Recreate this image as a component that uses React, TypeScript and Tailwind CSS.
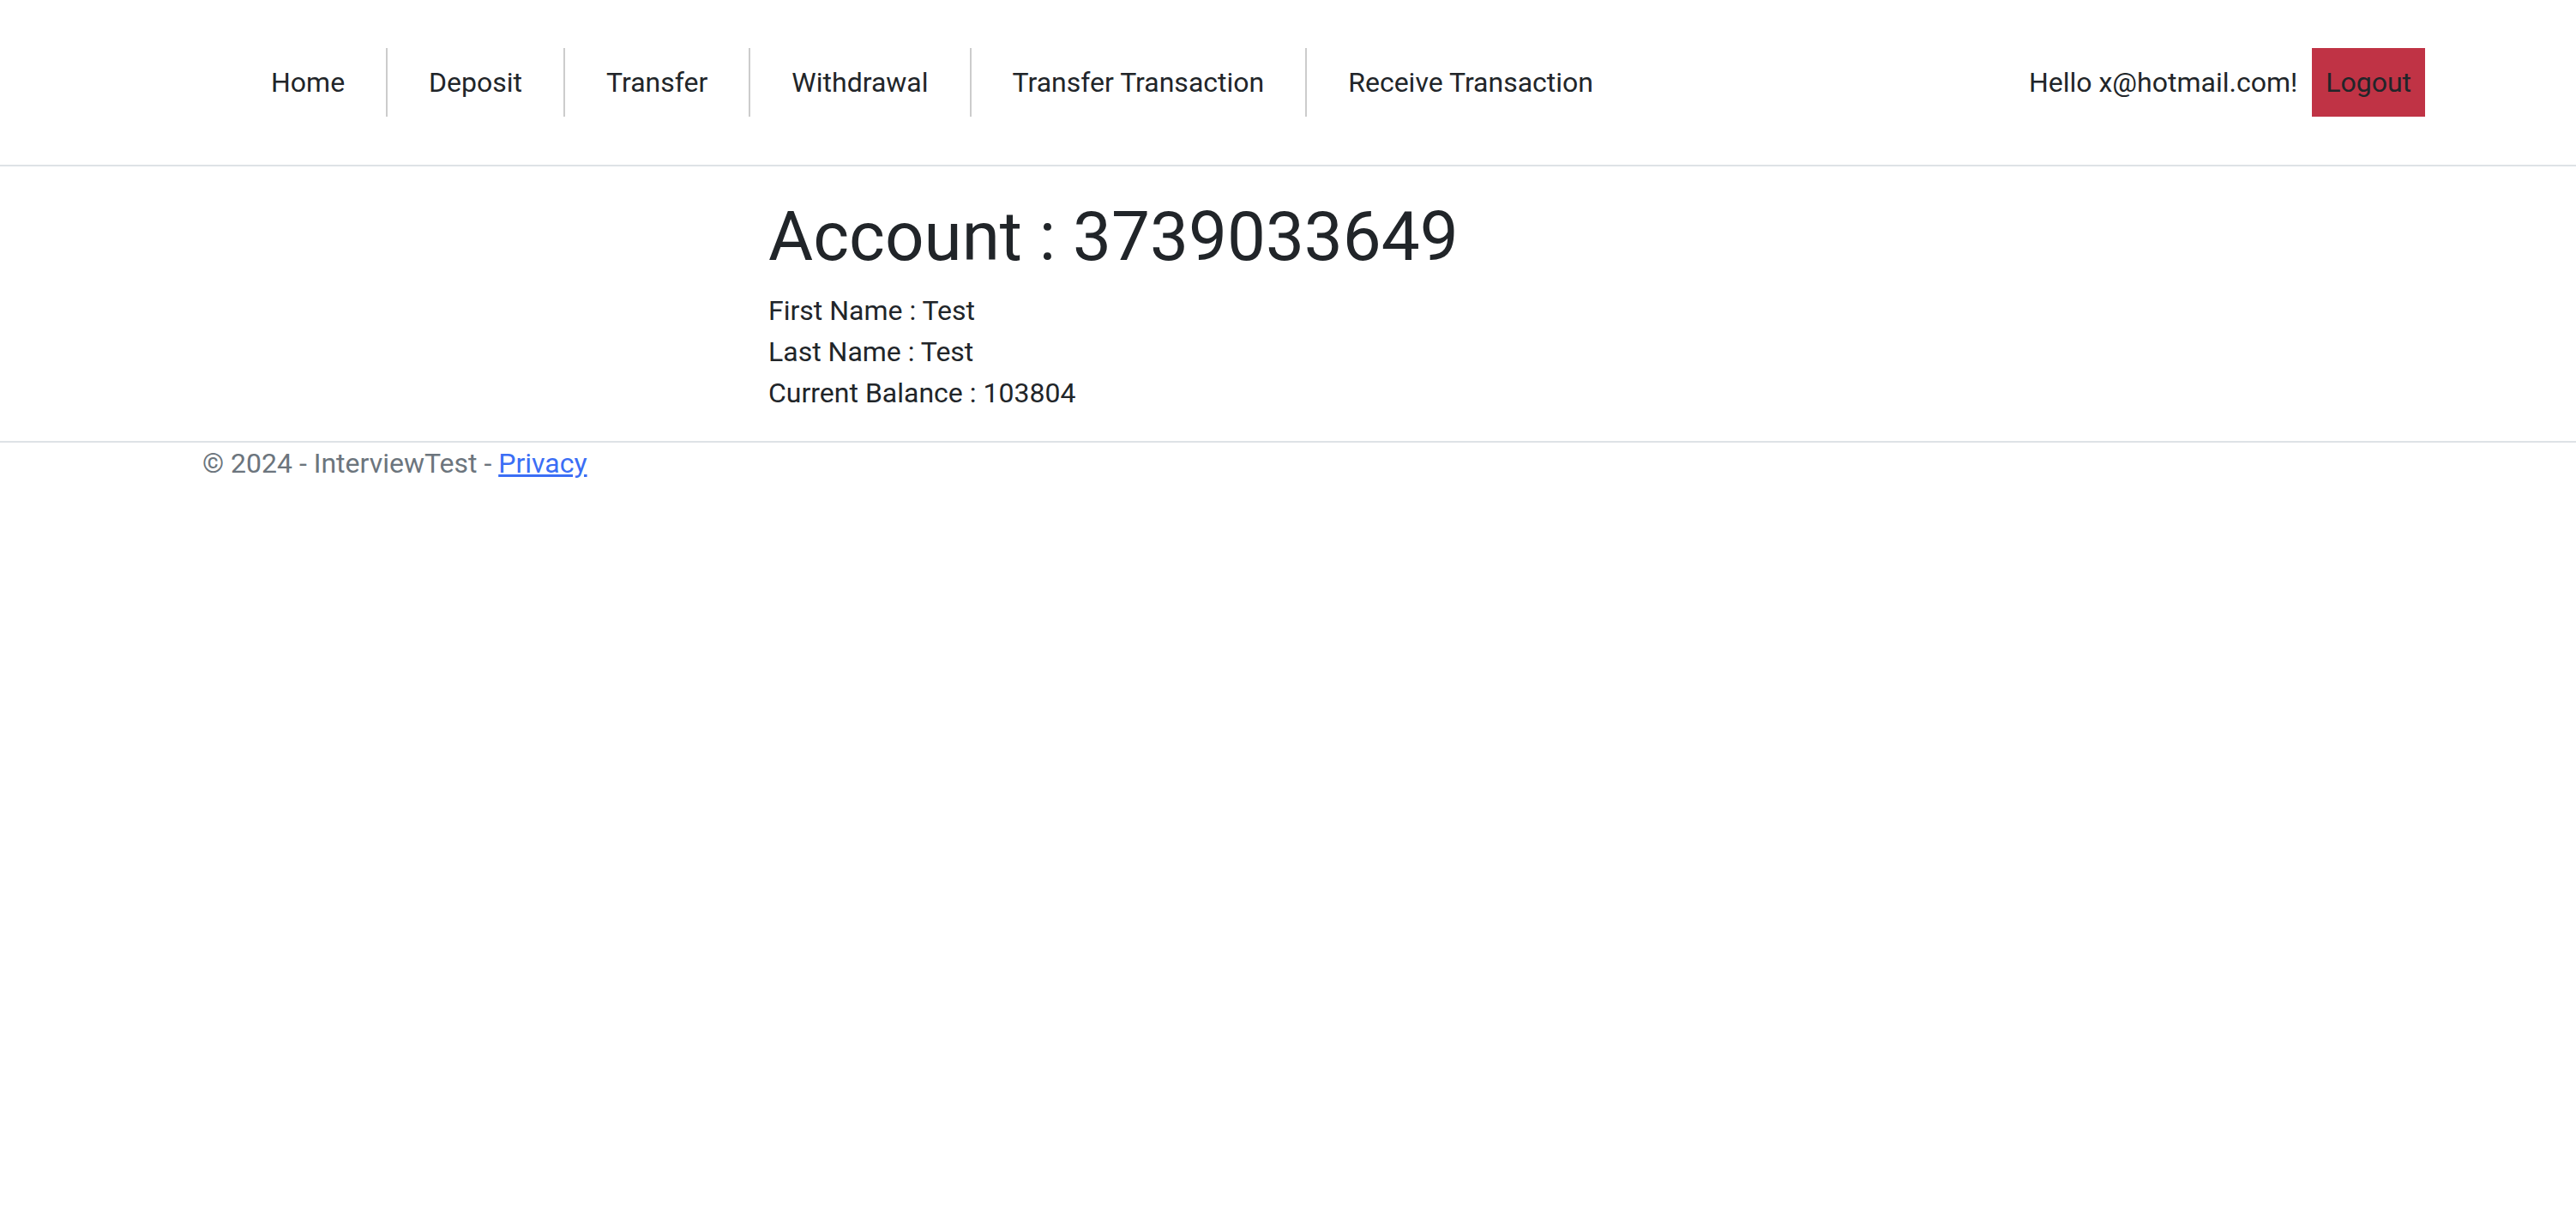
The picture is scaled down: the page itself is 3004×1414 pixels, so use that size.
import React from "react";

const links = ["Home", "Deposit", "Transfer", "Withdrawal", "Transfer Transaction", "Receive Transaction"];

export default function App() {
    return (
        <div className="min-h-screen bg-white text-[#212529] font-['Roboto',sans-serif]">
            <header className="border-b-2 border-[#dee2e6] py-[56px] pl-[268px] pr-[176px]">
                <div className="flex items-center justify-between">
                    <ul className="flex items-center">
                        {links.map((link, index) => (
                            <li
                                key={link}
                                className={`px-12 py-4 text-[32px] leading-[48px] ${index > 0 ? "border-l-2 border-[#cccccc]" : ""}`}
                            >
                                <a href="#">{link}</a>
                            </li>
                        ))}
                    </ul>
                    <div className="flex items-center gap-[17px]">
                        <span className="text-[32px] leading-[48px]">Hello x@hotmail.com!</span>
                        <button className="bg-[#c03345] px-[16px] py-4 text-[32px] leading-[48px] text-[#212529]">
                            Logout
                        </button>
                    </div>
                </div>
            </header>

            <main className="pl-[896px] pt-[34px] pb-[32px]">
                <h1 className="text-[80px] leading-[96px] mb-[14px]">Account : 3739033649</h1>
                <div className="text-[32px] leading-[48px]">
                    <div>First Name : Test</div>
                    <div>Last Name : Test</div>
                    <div>Current Balance : 103804</div>
                </div>
            </main>

            <footer className="border-t-2 border-[#dee2e6] pl-[236px] text-[32px] leading-[48px] text-[#6c757d]">
                © 2024 - InterviewTest - <a href="#" className="text-[#3b6ef5] underline">Privacy</a>
            </footer>
        </div>
    );
}
